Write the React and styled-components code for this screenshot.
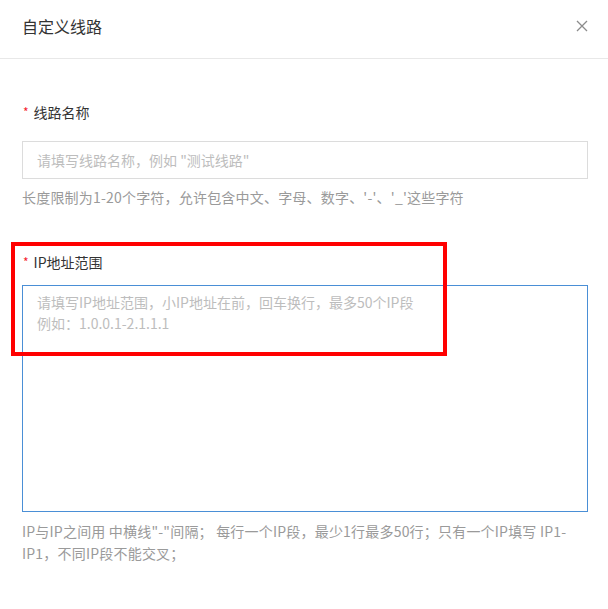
import React from "react";
import styled, { createGlobalStyle } from "styled-components";

const Global = createGlobalStyle`
  html, body { margin: 0; padding: 0; background: #fff; }
  body { font-family: "Noto Sans CJK SC", "Noto Sans", sans-serif; }
  * { box-sizing: border-box; }
`;

const Dialog = styled.div`
  width: 608px;
  height: 609px;
  background: #fff;
  overflow: hidden;
`;

const Header = styled.div`
  height: 59px;
  padding: 0 20px 6px 22px;
  display: flex;
  align-items: center;
  justify-content: space-between;
  border-bottom: 1px solid #e8e8e8;
`;

const Title = styled.div`
  font-size: 16px;
  color: #333;
  line-height: 22px;
`;

const CloseButton = styled.button`
  width: 12px;
  height: 12px;
  padding: 0;
  border: 0;
  background: none;
  display: flex;
  cursor: pointer;
`;

const Body = styled.div`
  padding: 43px 20px 0 22px;
  display: flex;
  flex-direction: column;
`;

const Field = styled.div`
  position: relative;
  margin-top: ${(p) => p.$top || 0}px;
  display: flex;
  flex-direction: column;
`;

const Label = styled.div`
  font-size: 14px;
  line-height: 20px;
  color: #333;
  display: flex;
  align-items: center;
  margin-bottom: ${(p) => p.$gap}px;
`;

const Star = styled.span`
  color: #f5222d;
  font-size: 12px;
  margin: 0 5px 0 1px;
  line-height: 1;
`;

const Input = styled.input`
  height: 38px;
  width: 100%;
  border: 1px solid #dcdcdc;
  padding: 0 14px;
  font-family: inherit;
  font-size: 14px;
  color: #333;
  outline: none;
  &::placeholder { color: #bdbdbd; }
`;

const TextArea = styled.textarea`
  height: 227px;
  width: 100%;
  border: 1px solid #4a8fd6;
  padding: 6px 14px;
  font-family: inherit;
  font-size: 14px;
  line-height: 21px;
  color: #333;
  resize: none;
  outline: none;
  display: block;
  &::placeholder { color: #bdbdbd; }
`;

const Help = styled.div`
  margin-top: 8px;
  font-size: 14px;
  line-height: ${(p) => p.$lh || 20}px;
  letter-spacing: 0.2px;
  color: #9a9a9a;
`;

const Annotation = styled.div`
  position: absolute;
  left: -11px;
  top: -10px;
  width: 436px;
  height: 114px;
  border: 4px solid #ff0000;
  pointer-events: none;
`;

export default function App() {
  return (
    <Dialog>
      <Global />
      <Header>
        <Title>自定义线路</Title>
        <CloseButton aria-label="关闭">
          <svg width="12" height="12" viewBox="0 0 12 12">
            <path d="M1 1 L11 11 M11 1 L1 11" stroke="#8c8c8c" strokeWidth="1.3" fill="none" />
          </svg>
        </CloseButton>
      </Header>
      <Body>
        <Field>
          <Label $gap={19}>
            <Star>*</Star>线路名称
          </Label>
          <Input placeholder={'请填写线路名称，例如 "测试线路"'} />
          <Help>长度限制为1-20个字符，允许包含中文、字母、数字、'-'、'_'这些字符</Help>
        </Field>
        <Field $top={45}>
          <Annotation />
          <Label $gap={13}>
            <Star>*</Star>IP地址范围
          </Label>
          <TextArea placeholder={"请填写IP地址范围，小IP地址在前，回车换行，最多50个IP段\n例如：1.0.0.1-2.1.1.1"} />
          <Help $lh={22}>
            IP与IP之间用 中横线"-"间隔； 每行一个IP段，最少1行最多50行；只有一个IP填写 IP1-<br />IP1，不同IP段不能交叉；
          </Help>
        </Field>
      </Body>
    </Dialog>
  );
}
